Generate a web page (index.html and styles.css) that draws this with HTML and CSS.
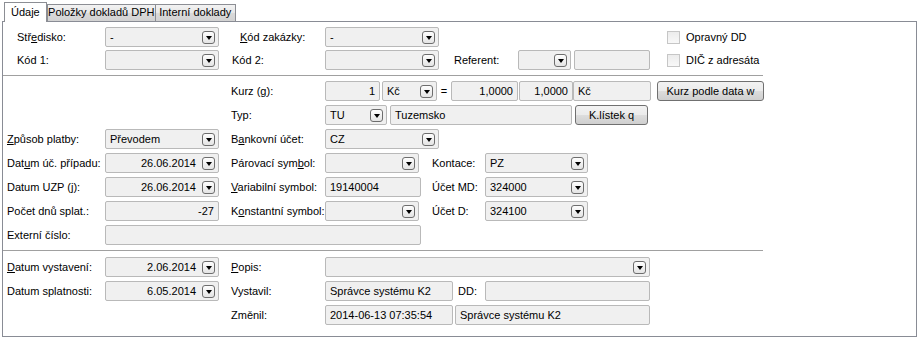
FILE: index.html
```html
<!DOCTYPE html>
<html lang="cs">
<head>
  <meta charset="UTF-8">
  <title>Doklad - Údaje</title>
  <link rel="stylesheet" href="styles.css">
</head>
<body>

  <div class="tabs">
    <div class="tab active">Údaje</div>
    <div class="tab tab-dph">Položky dokladů DPH</div>
    <div class="tab tab-int">Interní doklady</div>
  </div>

  <div class="panel">

    <div class="section first">
      <div class="row">
        <label class="lbl indent">Stř<u>e</u>disko:</label>
        <div class="combo f-main"><span class="val">-</span><span class="drop"></span></div>
        <label class="lbl-zak"><u>K</u>ód zakázky:</label>
        <div class="combo f-main"><span class="val">-</span><span class="drop"></span></div>
        <span class="check first-check"></span>
        <span class="check-text">Opravný DD</span>
      </div>
      <div class="row">
        <label class="lbl indent">Kód 1:</label>
        <div class="combo f-main"><span class="val"></span><span class="drop"></span></div>
        <label class="lbl-kod2">Kód 2:</label>
        <div class="combo f-main"><span class="val"></span><span class="drop"></span></div>
        <label class="lbl-ref">Referent:</label>
        <div class="combo f-ref"><span class="val"></span><span class="drop"></span></div>
        <div class="field f-refname"></div>
        <span class="check second-check"></span>
        <span class="check-text">DIČ z adresáta</span>
      </div>
    </div>

    <div class="sep"></div>

    <div class="section">
      <div class="row">
        <div class="skip"></div>
        <label class="lbl2">Kurz (<u>g</u>):</label>
        <div class="field num f-55">1</div>
        <div class="combo f-55 gap2"><span class="val">Kč</span><span class="drop"></span></div>
        <span class="eq">=</span>
        <div class="field num f-66">1,0000</div>
        <div class="field num f-54 gap1">1,0000</div>
        <div class="field f-78">Kč</div>
        <button class="btn btn-kurz">Kurz podle data w</button>
      </div>
      <div class="row">
        <div class="skip"></div>
        <label class="lbl2">Typ:</label>
        <div class="combo f-62"><span class="val">TU</span><span class="drop"></span></div>
        <div class="field f-182 gap3">Tuzemsko</div>
        <button class="btn btn-listek gap3">K.lístek q</button>
      </div>
      <div class="row">
        <label class="lbl"><u>Z</u>působ platby:</label>
        <div class="combo f-main"><span class="val">Převodem</span><span class="drop"></span></div>
        <label class="lbl2">B<u>a</u>nkovní účet:</label>
        <div class="combo f-main"><span class="val">CZ</span><span class="drop"></span></div>
      </div>
      <div class="row">
        <label class="lbl">Dat<u>u</u>m úč. případu:</label>
        <div class="combo f-main"><span class="val num">26.06.2014</span><span class="drop"></span></div>
        <label class="lbl2">Párovací sym<u>b</u>ol:</label>
        <div class="combo f-94"><span class="val"></span><span class="drop"></span></div>
        <label class="lbl-ucet">Kontace:</label>
        <div class="combo f-103"><span class="val">PZ</span><span class="drop"></span></div>
      </div>
      <div class="row">
        <label class="lbl">Datum UZP (<u>j</u>):</label>
        <div class="combo f-main"><span class="val num">26.06.2014</span><span class="drop"></span></div>
        <label class="lbl2"><u>V</u>ariabilní symbol:</label>
        <div class="field f-96">19140004</div>
        <label class="lbl-ucet after-field">Účet MD:</label>
        <div class="combo f-103"><span class="val">324000</span><span class="drop"></span></div>
      </div>
      <div class="row">
        <label class="lbl">Počet dnů splat.:</label>
        <div class="field num f-main">-27</div>
        <label class="lbl2">K<u>o</u>nstantní symbol:</label>
        <div class="combo f-94"><span class="val"></span><span class="drop"></span></div>
        <label class="lbl-ucet">Účet D:</label>
        <div class="combo f-103"><span class="val">324100</span><span class="drop"></span></div>
      </div>
      <div class="row">
        <label class="lbl">Externí číslo:</label>
        <div class="field f-316"></div>
      </div>
    </div>

    <div class="sep"></div>

    <div class="section last">
      <div class="row">
        <label class="lbl"><u>D</u>atum vystavení:</label>
        <div class="combo f-main"><span class="val num">2.06.2014</span><span class="drop"></span></div>
        <label class="lbl2"><u>P</u>opis:</label>
        <div class="combo f-325"><span class="val"></span><span class="drop"></span></div>
      </div>
      <div class="row">
        <label class="lbl">Datum splatnosti:</label>
        <div class="combo f-main"><span class="val num">6.05.2014</span><span class="drop"></span></div>
        <label class="lbl2">Vystavil:</label>
        <div class="field f-128">Správce systému K2</div>
        <label class="lbl-dd">DD:</label>
        <div class="field f-165"></div>
      </div>
      <div class="row">
        <div class="skip"></div>
        <label class="lbl2">Změnil:</label>
        <div class="field f-128">2014-06-13 07:35:54</div>
        <div class="field f-195 gap2">Správce systému K2</div>
      </div>
    </div>

  </div>

</body>
</html>
```

FILE: styles.css
```css
body {
  margin: 0;
  background-color: #fff;
  font-family: 'Liberation Sans', Arial, sans-serif;
  font-size: 11px;
  color: #000;
}

/* tabs */
.tabs {
  display: flex;
  align-items: flex-end;
  height: 21px;
  padding-left: 4px;
}

.tab {
  box-sizing: border-box;
  height: 17px;
  line-height: 15px;
  text-align: center;
  border: 1px solid #8c8e94;
  border-bottom: none;
  background: linear-gradient(#f3f3f3, #e6e6e6 50%, #d9d9d9 51%, #d2d2d2);
  white-space: nowrap;
}

.tab.active {
  position: relative;
  z-index: 1;
  height: 20px;
  margin-bottom: -1px;
  padding: 0 6px;
  line-height: 19px;
  background: #fff;
}

.tab-dph {
  width: 109px;
}

.tab-int {
  width: 81px;
  margin-left: -1px;
}

/* panel */
.panel {
  box-sizing: border-box;
  width: 915px;
  margin-left: 2px;
  padding-bottom: 11px;
  border: 1px solid #898c95;
}

.section {
  display: flex;
  flex-direction: column;
  gap: 4px;
  padding: 5px 0 5px 4px;
}

.section.first {
  gap: 3px;
}

.section.last {
  padding-top: 6px;
  padding-bottom: 0;
}

.sep {
  width: 760px;
  height: 1px;
  background-color: #a0a0a0;
}

.row {
  display: flex;
  align-items: center;
  height: 20px;
  white-space: nowrap;
}

/* labels */
.lbl {
  box-sizing: border-box;
  width: 98px;
}

.lbl.indent {
  padding-left: 10px;
}

.lbl2 {
  width: 94px;
  margin-left: 12px;
}

.skip {
  width: 212px;
}

.lbl-zak {
  width: 85px;
  margin-left: 21px;
}

.lbl-kod2 {
  width: 93px;
  margin-left: 13px;
}

.lbl-ref {
  width: 64px;
  margin-left: 15px;
}

.lbl-ucet {
  width: 53px;
  margin-left: 13px;
}

.lbl-ucet.after-field {
  margin-left: 11px;
}

.lbl-dd {
  width: 27px;
  margin-left: 5px;
}

.eq {
  width: 14px;
  text-align: center;
}

/* fields and combos */
.field,
.combo {
  box-sizing: border-box;
  height: 20px;
  border: 1px solid #b9b9b9;
  border-radius: 2px;
  background-color: #f0f0f0;
  line-height: 18px;
  overflow: hidden;
}

.field {
  padding: 0 4px 0 4px;
}

.field.num {
  text-align: right;
}

.combo {
  display: flex;
  align-items: center;
}

.combo .val {
  flex: 1;
  padding-left: 4px;
}

.combo .val.num {
  padding-right: 6px;
  text-align: right;
}

.drop {
  box-sizing: border-box;
  display: flex;
  align-items: center;
  justify-content: center;
  width: 13px;
  height: 13px;
  margin-right: 3px;
  border: 1px solid #6d6d6d;
  border-radius: 3px;
  background: linear-gradient(#fefefe, #e4e4e4);
}

.drop::after {
  content: '';
  margin-top: 1px;
  border-left: 3px solid transparent;
  border-right: 3px solid transparent;
  border-top: 4px solid #000;
}

.f-main { width: 114px; }
.f-ref { width: 53px; }
.f-refname { width: 76px; margin-left: 3px; }
.f-55 { width: 55px; }
.f-66 { width: 67px; }
.f-54 { width: 54px; }
.f-78 { width: 78px; }
.f-62 { width: 62px; }
.f-182 { width: 182px; }
.f-94 { width: 94px; }
.f-96 { width: 96px; }
.f-103 { width: 103px; }
.f-316 { width: 316px; }
.f-325 { width: 325px; }
.f-128 { width: 128px; }
.f-165 { width: 165px; }
.f-195 { width: 195px; }

.gap1 { margin-left: 1px; }
.gap2 { margin-left: 2px; }
.gap3 { margin-left: 3px; }

/* buttons */
.btn {
  box-sizing: border-box;
  height: 20px;
  padding: 0;
  border: 1px solid #707070;
  border-radius: 3px;
  background: linear-gradient(#f2f2f2, #ebebeb 50%, #dddddd 51%, #cfcfcf);
  font-family: inherit;
  font-size: 11px;
  color: #000;
}

.btn-kurz {
  width: 107px;
  margin-left: 6px;
}

.btn-listek {
  width: 73px;
}

/* checkboxes */
.check {
  box-sizing: border-box;
  width: 13px;
  height: 13px;
  border: 1px solid #c6c6c6;
  background: linear-gradient(#ececec, #f8f8f8);
}

.first-check {
  margin-left: 228px;
}

.second-check {
  margin-left: 17px;
}

.check-text {
  margin-left: 6px;
}
```
